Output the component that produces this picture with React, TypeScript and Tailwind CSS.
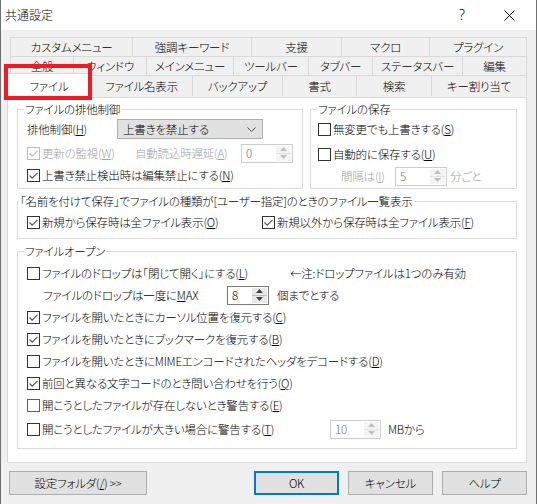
import React from 'react';

type BoxProps = { checked?: boolean; disabled?: boolean; focus?: boolean };

function CheckBox({ checked, disabled, focus }: BoxProps) {
  const edge = disabled ? '#bcbcbc' : focus ? '#0078d7' : '#333333';
  const mark = disabled ? '#bcbcbc' : '#555555';
  return (
    <svg width="13" height="13" viewBox="0 0 13 13" className="shrink-0">
      <rect x="0.5" y="0.5" width="12" height="12" fill="#ffffff" stroke={edge} />
      {checked && <path d="M2.5 6.5 5.2 9.2 10.5 3.8" fill="none" stroke={mark} strokeWidth="1.2" />}
    </svg>
  );
}

type CheckProps = BoxProps & { children: React.ReactNode; className?: string };

function Check({ children, checked, disabled, focus, className = '' }: CheckProps) {
  return (
    <div className={`flex h-[20px] shrink-0 items-center gap-[2px] ${disabled ? 'text-[#a0a0a0]' : ''} ${className}`}>
      <CheckBox checked={checked} disabled={disabled} focus={focus} />
      <span className="whitespace-nowrap">{children}</span>
    </div>
  );
}

function Spin({ value, disabled, className = '' }: { value: string; disabled?: boolean; className?: string }) {
  const arrow = disabled ? '#bfbfbf' : '#404040';
  return (
    <div
      className={`flex h-[19px] shrink-0 border bg-white ${
        disabled ? 'border-[#cccccc] text-[#6d6d6d]' : 'border-[#7a7a7a] text-black'
      } ${className}`}
    >
      <span className="flex-1 pl-[4px] leading-[17px]">{value}</span>
      <div className="my-[1px] mr-[1px] flex w-[15px] flex-col">
        <div className={`flex flex-1 items-center justify-center border-b ${disabled ? 'border-[#e3e3e3] bg-[#f4f4f4]' : 'border-[#bcbcbc] bg-[#e8e8e8]'}`}>
          <svg width="7" height="4" viewBox="0 0 7 4">
            <path d="M0 4 3.5 0 7 4Z" fill={arrow} />
          </svg>
        </div>
        <div className={`flex flex-1 items-center justify-center ${disabled ? 'bg-[#f4f4f4]' : 'bg-[#e8e8e8]'}`}>
          <svg width="7" height="4" viewBox="0 0 7 4">
            <path d="M0 0 3.5 4 7 0Z" fill={arrow} />
          </svg>
        </div>
      </div>
    </div>
  );
}

const row1: [string, string][] = [
  ['カスタムメニュー', 'w-[122px]'],
  ['強調キーワード', 'w-[119px]'],
  ['支援', 'w-[90px]'],
  ['マクロ', 'w-[88px]'],
  ['プラグイン', 'w-[98px]'],
];

const row2: [string, string][] = [
  ['全般', 'w-[63px]'],
  ['ウィンドウ', 'w-[73px]'],
  ['メインメニュー', 'w-[87px]'],
  ['ツールバー', 'w-[75px]'],
  ['タブバー', 'w-[64px]'],
  ['ステータスバー', 'w-[90px]'],
  ['編集', 'w-[65px]'],
];

const row3: [string, string][] = [
  ['ファイル名表示', 'w-[101px]'],
  ['バックアップ', 'w-[90px]'],
  ['書式', 'w-[74px]'],
  ['検索', 'w-[75px]'],
  ['キー割り当て', 'w-[96px]'],
];

function TabRow({ tabs, height }: { tabs: [string, string][]; height: string }) {
  return (
    <div className="flex">
      {tabs.map(([label, w], i) => (
        <div
          key={label}
          className={`${w} ${height} flex items-center justify-center border-l border-t border-[#d9d9d9] ${
            i === tabs.length - 1 ? 'border-r' : ''
          }`}
        >
          {label}
        </div>
      ))}
    </div>
  );
}

export default function App() {
  return (
    <div className="relative h-[504px] w-[537px] overflow-hidden border-x border-[#707070] bg-[#f0f0f0] font-['Noto_Sans_CJK_JP','Noto_Sans',sans-serif] text-[11.5px] font-light leading-[16px] tracking-[-0.2px] text-black [font-feature-settings:'palt']">
      {/* title bar */}
      <div className="flex h-[30px] items-center bg-white pl-[4px] text-[12px] tracking-normal">
        <span className="flex-1">共通設定</span>
        <span className="mr-[39px] font-['Noto_Sans',sans-serif] text-[14px]">?</span>
        <svg width="11" height="11" viewBox="0 0 11 11" className="mr-[21px]">
          <path d="M0.5 0.5 10.5 10.5M10.5 0.5 0.5 10.5" stroke="#000000" strokeWidth="1" />
        </svg>
      </div>

      {/* tabs */}
      <div className="pl-[9px] pt-[7px]">
        <TabRow tabs={row1} height="h-[19px]" />
        <TabRow tabs={row2} height="h-[19px]" />
        <div className="flex items-start">
          <div className="relative z-10 -ml-[3px] -mt-[2px] flex h-[24px] w-[84px] items-center justify-center border-l border-r border-t border-[#d9d9d9] bg-white">
            ファイル
          </div>
          {row3.map(([label, w], i) => (
            <div
              key={label}
              className={`${w} flex h-[21px] items-center justify-center border-t border-[#d9d9d9] ${
                i === 0 ? '' : 'border-l'
              } ${i === row3.length - 1 ? 'border-r' : ''}`}
            >
              {label}
            </div>
          ))}
        </div>
      </div>

      {/* highlight around selected tab */}
      <div className="absolute left-[3px] top-[64px] z-20 h-[36px] w-[88px] border-[4px] border-[#ed1c24]" />

      {/* tab page */}
      <div className="ml-[6px] flex h-[366px] w-[520px] flex-col border border-[#d9d9d9] bg-white px-[9px] pt-[3px]">
        <div className="flex gap-[7px]">
          <fieldset className="h-[88px] w-[286px] border border-[#dcdcdc]">
            <legend className="ml-[6px] px-[1px]">ファイルの排他制御</legend>
            <div className="flex flex-col pl-[9px]">
              <div className="mt-[2px] flex h-[20px] items-center">
                <span className="w-[90px]">
                  排他制御(<u>H</u>)
                </span>
                <div className="flex h-[20px] w-[146px] items-center justify-between border border-[#adadad] bg-[#e1e1e1] pl-[5px] pr-[6px]">
                  <span>上書きを禁止する</span>
                  <svg width="9" height="5" viewBox="0 0 9 5">
                    <path d="M0.5 0.5 4.5 4.5 8.5 0.5" fill="none" stroke="#505050" strokeWidth="1" />
                  </svg>
                </div>
              </div>
              <div className="mt-[4px] flex h-[20px] items-center">
                <Check checked disabled className="w-[108px]">
                  更新の監視(<u>W</u>)
                </Check>
                <span className="w-[106px] text-[#a0a0a0]">
                  自動読込時遅延(<u>A</u>)
                </span>
                <Spin value="0" disabled className="w-[52px]" />
              </div>
              <Check checked className="mt-[2px]">
                上書き禁止検出時は編集禁止にする(<u>N</u>)
              </Check>
            </div>
          </fieldset>

          <fieldset className="h-[88px] w-[207px] border border-[#dcdcdc]">
            <legend className="ml-[6px] px-[1px]">ファイルの保存</legend>
            <div className="flex flex-col pl-[7px]">
              <Check className="mt-[2px]">
                無変更でも上書きする(<u>S</u>)
              </Check>
              <Check className="mt-[5px]">
                自動的に保存する(<u>U</u>)
              </Check>
              <div className="mt-[2px] flex h-[20px] items-center pl-[23px] text-[#a0a0a0]">
                <span className="w-[54px]">
                  間隔は(<u>I</u>)
                </span>
                <Spin value="5" disabled className="w-[52px]" />
                <span className="ml-[3px]">分ごと</span>
              </div>
            </div>
          </fieldset>
        </div>

        <fieldset className="mt-[4px] h-[46px] w-[500px] border border-[#dcdcdc]">
          <legend className="ml-[1px] px-[1px]">「名前を付けて保存」でファイルの種類が[ユーザー指定]のときのファイル一覧表示</legend>
          <div className="mt-[3px] flex pl-[9px]">
            <Check checked className="w-[235px]">
              新規から保存時は全ファイル表示(<u>O</u>)
            </Check>
            <Check checked>
              新規以外から保存時は全ファイル表示(<u>F</u>)
            </Check>
          </div>
        </fieldset>

        <fieldset className="mt-[4px] h-[206px] w-[500px] border border-[#dcdcdc]">
          <legend className="ml-[6px] px-[1px]">ファイルオープン</legend>
          <div className="flex flex-col gap-[2px] pl-[9px] pt-[4px]">
            <div className="flex h-[20px] items-center">
              <Check className="w-[263px]">
                ファイルのドロップは「閉じて開く」にする(<u>L</u>)
              </Check>
              <span>←注:ドロップファイルは1つのみ有効</span>
            </div>
            <div className="flex h-[20px] items-center pl-[16px]">
              <span className="w-[184px]">
                ファイルのドロップは一度に<u>M</u>AX
              </span>
              <Spin value="8" className="w-[42px]" />
              <span className="ml-[8px]">個までとする</span>
            </div>
            <Check checked>
              ファイルを開いたときにカーソル位置を復元する(<u>C</u>)
            </Check>
            <Check checked>
              ファイルを開いたときにブックマークを復元する(<u>B</u>)
            </Check>
            <Check>
              ファイルを開いたときにMIMEエンコードされたヘッダをデコードする(<u>D</u>)
            </Check>
            <Check checked>
              前回と異なる文字コードのとき問い合わせを行う(<u>Q</u>)
            </Check>
            <Check focus>
              開こうとしたファイルが存在しないとき警告する(<u>E</u>)
            </Check>
            <div className="mt-[2px] flex h-[20px] items-center">
              <Check className="w-[303px]">
                開こうとしたファイルが大きい場合に警告する(<u>T</u>)
              </Check>
              <Spin value="10" disabled className="w-[51px]" />
              <span className="ml-[7px]">MBから</span>
            </div>
          </div>
        </fieldset>
      </div>

      {/* buttons */}
      <div className="mt-[8px] flex pl-[8px]">
        <button className="h-[24px] w-[138px] border border-[#adadad] bg-[#e1e1e1]">
          設定フォルダ(<u>/</u>) &gt;&gt;
        </button>
        <button className="ml-[107px] h-[24px] w-[85px] border-2 border-[#0078d7] bg-[#e1e1e1]">OK</button>
        <button className="ml-[9px] h-[24px] w-[85px] border border-[#adadad] bg-[#e1e1e1]">キャンセル</button>
        <button className="ml-[9px] h-[24px] w-[85px] border border-[#adadad] bg-[#e1e1e1]">ヘルプ</button>
      </div>
    </div>
  );
}
